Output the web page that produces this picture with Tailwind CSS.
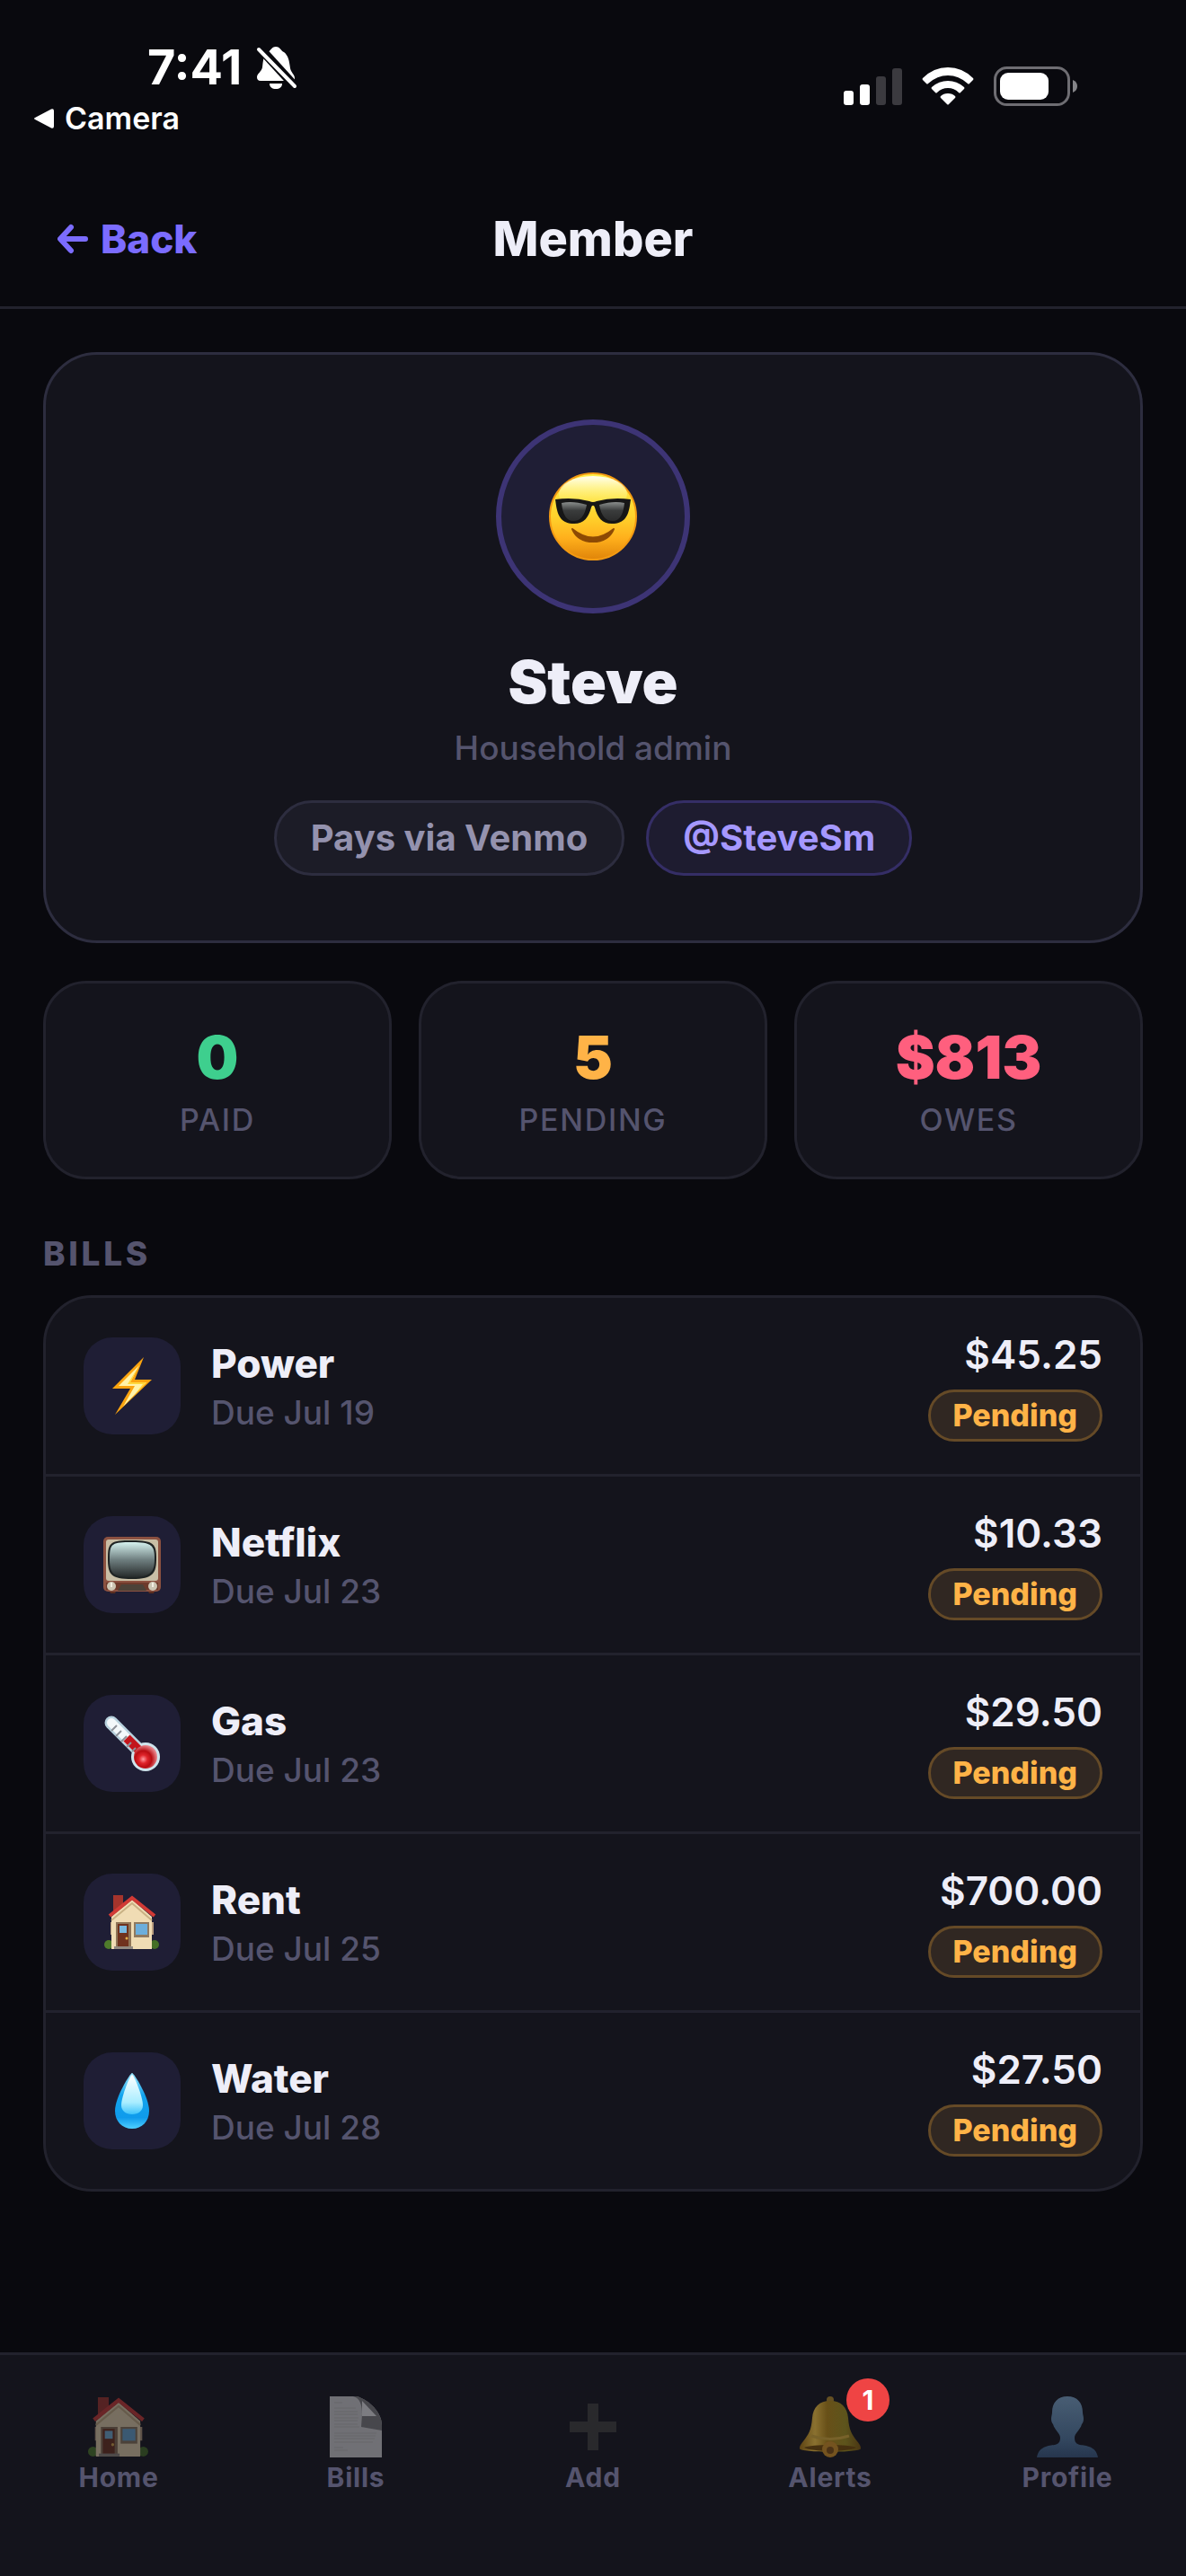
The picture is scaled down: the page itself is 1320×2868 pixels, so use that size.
<!DOCTYPE html>
<html lang="en">

<head>
    <meta charset="UTF-8">
    <meta name="viewport" content="width=device-width, initial-scale=1.0">
    <title>Member - Steve</title>
    <script src="https://cdn.jsdelivr.net/npm/@tailwindcss/browser@4"></script>
</head>

<body class="min-h-screen flex flex-col bg-[#09090e] text-[#eeeef8] font-['Inter',sans-serif]">

    <!-- Shared icons -->
    <svg class="absolute w-0 h-0" aria-hidden="true">
        <defs>
            <linearGradient id="face" x1="0" y1="0" x2="0" y2="1">
                <stop offset="0" stop-color="#fff04a" />
                <stop offset=".5" stop-color="#ffd22c" />
                <stop offset=".75" stop-color="#ffb01c" />
                <stop offset="1" stop-color="#e08409" />
            </linearGradient>
            <linearGradient id="shine" x1="0" y1="0" x2="0" y2="1">
                <stop offset="0" stop-color="#fffef0" />
                <stop offset="1" stop-color="#fff04a" stop-opacity="0" />
            </linearGradient>
            <linearGradient id="lens" x1="0" y1="0" x2="0" y2="1">
                <stop offset="0" stop-color="#8b8f8e" />
                <stop offset=".45" stop-color="#3a3c3c" />
                <stop offset="1" stop-color="#2b2b2b" />
            </linearGradient>
            <linearGradient id="screen" x1="0" y1="0" x2="0" y2="1">
                <stop offset="0" stop-color="#d6f2ef" />
                <stop offset=".5" stop-color="#6f7f80" />
                <stop offset="1" stop-color="#262a2a" />
            </linearGradient>
            <linearGradient id="drop" x1="0" y1="0" x2="0" y2="1">
                <stop offset="0" stop-color="#9be6fb" />
                <stop offset=".4" stop-color="#12a4ee" />
                <stop offset=".8" stop-color="#0f9bec" />
                <stop offset="1" stop-color="#4fd0ff" />
            </linearGradient>
            <linearGradient id="dropshine" x1="0" y1="0" x2="0" y2="1">
                <stop offset="0" stop-color="#ffffff" />
                <stop offset=".7" stop-color="#a9edff" />
                <stop offset="1" stop-color="#3fc4fb" />
            </linearGradient>
            <linearGradient id="person" x1="0" y1="0" x2="0" y2="1">
                <stop offset="0" stop-color="#485d73" />
                <stop offset=".7" stop-color="#33475f" />
                <stop offset="1" stop-color="#26364e" />
            </linearGradient>
            <linearGradient id="brass" x1="0" y1="0" x2="1" y2="0">
                <stop offset="0" stop-color="#5e4413" />
                <stop offset=".25" stop-color="#8a7130" />
                <stop offset=".45" stop-color="#685018" />
                <stop offset=".75" stop-color="#5d541c" />
                <stop offset="1" stop-color="#4a3612" />
            </linearGradient>
            <radialGradient id="bulb" cx=".4" cy=".6" r=".6">
                <stop offset="0" stop-color="#ff9aa0" />
                <stop offset=".3" stop-color="#e0252b" />
                <stop offset=".6" stop-color="#b80d12" />
                <stop offset="1" stop-color="#e8848a" />
            </radialGradient>
        </defs>
        <symbol id="house" viewBox="0 0 62 62">
            <circle cx="5" cy="56" r="5" fill="#4f7c2b" />
            <circle cx="56" cy="56" r="5" fill="#456f25" />
            <path d="M10 1h11v14L10 25z" fill="#a5342c" />
            <path d="M7 31h48v14H7z" fill="#b89d7e" />
            <path d="M8 25 31 6l22 19v36H8z" fill="#f0dcb4" />
            <path d="M8 29 31 10l22 19" fill="none" stroke="#c9b184" stroke-width="2" />
            <path d="M6 24 31 4l25 20" fill="none" stroke="#d23a35" stroke-width="4" />
            <path d="M13 31h17v28H13z" fill="#8f7558" />
            <path d="M15 33h12v26H15z" fill="#70321e" />
            <path d="M17 35h8v8h-8z" fill="#79b9e0" />
            <circle cx="25" cy="49" r="1.5" fill="#e2b04b" />
            <path d="M33 31h17v17H33z" fill="#8f7a60" />
            <path d="M35 33h13v12H35z" fill="#6caedb" />
            <path d="M11 58h21v3H11z" fill="#928a80" />
        </symbol>
    </svg>

    <!-- Status bar -->
    <div class="h-[191px] flex justify-between pl-9 pr-[120px] text-white">
        <div class="pt-11">
            <div class="flex items-center gap-4 pl-[128px]">
                <time class="text-[54px] leading-[62px] font-bold">7:41</time>
                <svg class="w-[46px] h-12" viewBox="0 0 46 48" fill="#fff">
                    <path d="M13 7c3-1 4-6 9-6s6 5 9 6c5 4 6 10 7 18 1 5 5 7 5 11 0 2-1 3-3 3H5c-3 0-4-2-4-4 0-4 5-6 6-11C8 16 8 11 13 7z" />
                    <path d="M15 42h14c0 4-3 6-7 6s-7-2-7-6z" />
                    <path d="M3 1l42 46" stroke="#09090e" stroke-width="10" />
                    <path d="M3 4l40 41" stroke="#fff" stroke-width="4" stroke-linecap="round" />
                </svg>
            </div>
            <a href="#" class="flex items-center gap-3 text-[34px] leading-[44px] font-semibold mt-1">
                <svg class="w-6 h-6" viewBox="0 0 24 24" fill="#fff">
                    <path d="M3 11 21 1.500q3-1 3 2v17q0 3-3 2L3 13q-2-1 0-2z" />
                </svg>
                Camera
            </a>
        </div>
        <div class="flex items-center gap-[22px] h-[192px]">
            <svg class="w-[66px] h-[42px]" viewBox="0 0 66 42">
                <rect x="1" y="26" width="11" height="16" rx="3" fill="#fff" />
                <rect x="19" y="19" width="11" height="23" rx="3" fill="#fff" />
                <rect x="37" y="10" width="11" height="32" rx="3" fill="#3b3a3f" />
                <rect x="55" y="1" width="11" height="41" rx="3" fill="#3b3a3f" />
            </svg>
            <svg class="w-[58px] h-[42px]" viewBox="0 0 58 42" fill="#fff">
                <path d="M1 12Q13 0 29 0t28 12q1 1 0 2l-4 4q-1 1-2 0Q41 9 29 9T7 18q-1 1-2 0l-4-4q-1-1 0-2z" />
                <path d="M11 22q8-7 18-7t18 7q1 1 0 2l-4 4q-1 1-2 0-5-5-12-5t-12 5q-1 1-2 0l-4-4q-1-1 0-2z" />
                <path d="M21 32q3-3 8-3t8 3q1 1 0 2l-7 7q-1 1-2 0l-7-7q-1-1 0-2z" />
            </svg>
            <svg class="w-[94px] h-11" viewBox="0 0 94 44">
                <rect x="1.500" y="1.500" width="82" height="41" rx="13" fill="none" stroke="#6e6d72" stroke-width="3" />
                <rect x="7" y="7" width="54" height="30" rx="9" fill="#fff" />
                <path d="M88 15q5 2 5 7t-5 7z" fill="#848488" />
            </svg>
        </div>
    </div>

    <!-- Header -->
    <header class="grid grid-cols-3 items-center px-[60px] py-[42px] border-b-3 border-[#22222d]">
        <button type="button" class="justify-self-start flex items-center gap-3 pl-1 text-[44px] leading-[66px] font-extrabold text-[#7b6cff]">
            <svg class="w-[36px] h-[36px]" viewBox="0 0 36 36" fill="none" stroke="currentColor" stroke-width="6" stroke-linecap="round" stroke-linejoin="round">
                <path d="M31 18H4M15 5 3 18l12 13" />
            </svg>
            Back
        </button>
        <h1 class="text-center text-[54px] leading-[66px] font-extrabold">Member</h1>
    </header>

    <main class="flex-1 px-12 pt-12">
        <!-- Member card -->
        <section class="flex flex-col items-center py-[72px] rounded-[60px] border-3 border-[#2d2d3f] bg-[#14141c]">
            <div class="w-[216px] h-[216px] rounded-full border-6 border-[#3d3475] bg-[#1f1e35] flex items-center justify-center">
                <svg class="w-[98px] h-[98px]" viewBox="0 0 98 98">
                    <circle cx="49" cy="49" r="48" fill="url(#face)" stroke="#f39a12" stroke-width="2" />
                    <ellipse cx="49" cy="24" rx="38" ry="20" fill="url(#shine)" />
                    <path d="M7 30q20-3 38 2 4 2 8 0 18-5 38-2l-1 7c-2 12-6 20-20 20-11 0-16-7-19-18-1-3-3-3-4 0-3 11-8 18-19 18C14 57 10 49 8 37z" fill="#161616" />
                    <path d="M14 34q12-3 28 2-3 18-15 18-11 0-13-20zM84 34q-12-3-28 2 3 18 15 18 11 0 13-20z" fill="url(#lens)" />
                    <path d="M26 63q23 19 46 0-6 14-23 14T26 63z" fill="#8d4a04" stroke="#8d4a04" stroke-width="2" stroke-linejoin="round" />
                </svg>
            </div>
            <h2 class="mt-9 text-[66px] leading-[80px] font-black">Steve</h2>
            <p class="mt-3 text-[37px] leading-[44px] font-medium text-[#55546e]">Household admin</p>
            <div class="mt-9 flex gap-6">
                <span class="px-[38px] py-[15px] rounded-full border-3 border-[#2d2d3f] bg-[#1c1c27] text-[40px] leading-[48px] font-bold text-[#9492ae]">Pays via Venmo</span>
                <a href="#" class="px-[38px] py-[15px] rounded-full border-3 border-[#352e66] bg-[#1e1c30] text-[40px] leading-[48px] font-bold text-[#a598ff]">@SteveSm</a>
            </div>
        </section>

        <!-- Totals -->
        <section class="mt-[42px] grid grid-cols-3 gap-[30px] text-center">
            <div class="py-[42px] rounded-[48px] border-3 border-[#22222d] bg-[#14141c]">
                <p class="text-[66px] leading-[80px] font-black text-[#3ecf8e]">0</p>
                <p class="mt-[9px] text-[34px] leading-[42px] font-medium tracking-wider text-[#55546e]">PAID</p>
            </div>
            <div class="py-[42px] rounded-[48px] border-3 border-[#22222d] bg-[#14141c]">
                <p class="text-[66px] leading-[80px] font-black text-[#ffb347]">5</p>
                <p class="mt-[9px] text-[34px] leading-[42px] font-medium tracking-wider text-[#55546e]">PENDING</p>
            </div>
            <div class="py-[42px] rounded-[48px] border-3 border-[#22222d] bg-[#14141c]">
                <p class="text-[66px] leading-[80px] font-black text-[#ff5f7e]">$813</p>
                <p class="mt-[9px] text-[34px] leading-[42px] font-medium tracking-wider text-[#55546e]">OWES</p>
            </div>
        </section>

        <!-- Bills -->
        <h3 class="mt-15 mb-6 text-[37px] leading-[45px] font-extrabold tracking-widest text-[#55546e]">BILLS</h3>
        <ul class="rounded-[54px] border-3 border-[#22222d] bg-[#14141c] divide-y-3 divide-[#22222d]">
            <li class="flex items-center gap-[34px] px-[42px] py-9">
                <div class="w-[108px] h-[108px] rounded-[32px] bg-[#1f1e35] flex items-center justify-center">
                    <svg class="w-16 h-16" viewBox="0 0 64 64">
                        <path d="M45 0 10 35h20L13 64l41-39H35z" fill="#fba40f" />
                        <path d="M40 9 17 32h18l-13 23 26-27H30z" fill="#fff3a8" />
                        <path d="M40 9 30 28h18L34 43l10-13H27z" fill="#ffd83a" />
                    </svg>
                </div>
                <div class="flex-1">
                    <p class="text-[44px] leading-[54px] font-extrabold">Power</p>
                    <p class="mt-[6px] text-[37px] leading-[44px] font-medium text-[#55546e]">Due Jul 19</p>
                </div>
                <div class="flex flex-col items-end gap-3">
                    <span class="text-[44px] leading-[54px] font-semibold">$45.25</span>
                    <span class="px-[25px] py-[6px] rounded-full border-3 border-[#654a27] bg-[#302722] text-[34px] leading-[40px] font-extrabold text-[#ffb347]">Pending</span>
                </div>
            </li>
            <li class="flex items-center gap-[34px] px-[42px] py-9">
                <div class="w-[108px] h-[108px] rounded-[32px] bg-[#1f1e35] flex items-center justify-center">
                    <svg class="w-16 h-16" viewBox="0 0 64 64">
                        <path d="M6 60h9l-2 4H8zM49 60h9l-2 4h-5z" fill="#5a2d20" />
                        <rect x="0" y="1" width="64" height="61" rx="5" fill="#8c5140" />
                        <rect x="3" y="4" width="58" height="46" rx="3" fill="#c9bfa6" />
                        <path d="M32 5c24 0 27 4 27 20S56 48 32 48 5 43 5 25 8 5 32 5z" fill="#1f2424" />
                        <path d="M32 7c22 0 25 4 25 18S54 46 32 46 7 42 7 25 10 7 32 7z" fill="url(#screen)" />
                        <path d="M3 52h58v8H3z" fill="#6d3a2b" />
                        <path d="M20 54h24l4 7H16z" fill="#4c4238" />
                        <circle cx="9" cy="56" r="5" fill="#cdc6b4" />
                        <circle cx="55" cy="56" r="5" fill="#cdc6b4" />
                        <path d="M9 52v5M55 52v5" stroke="#f2eee2" stroke-width="2" />
                    </svg>
                </div>
                <div class="flex-1">
                    <p class="text-[44px] leading-[54px] font-extrabold">Netflix</p>
                    <p class="mt-[6px] text-[37px] leading-[44px] font-medium text-[#55546e]">Due Jul 23</p>
                </div>
                <div class="flex flex-col items-end gap-3">
                    <span class="text-[44px] leading-[54px] font-semibold">$10.33</span>
                    <span class="px-[25px] py-[6px] rounded-full border-3 border-[#654a27] bg-[#302722] text-[34px] leading-[40px] font-extrabold text-[#ffb347]">Pending</span>
                </div>
            </li>
            <li class="flex items-center gap-[34px] px-[42px] py-9">
                <div class="w-[108px] h-[108px] rounded-[32px] bg-[#1f1e35] flex items-center justify-center">
                    <svg class="w-16 h-16" viewBox="0 0 64 64">
                        <path d="M9 9 46 46" stroke="#b8d2de" stroke-width="15" stroke-linecap="round" />
                        <circle cx="47" cy="47" r="16" fill="#cfe4ec" />
                        <path d="M9 9 46 46" stroke="#f3f8fa" stroke-width="10" stroke-linecap="round" />
                        <path d="M26 26 44 44" stroke="#c3161c" stroke-width="10" />
                        <circle cx="47" cy="47" r="13" fill="url(#bulb)" />
                        <path d="M9 18l6-6M14 24l6-6M20 30l6-6M26 36l5-5M32 41l4-4" stroke="#8d9298" stroke-width="2" />
                    </svg>
                </div>
                <div class="flex-1">
                    <p class="text-[44px] leading-[54px] font-extrabold">Gas</p>
                    <p class="mt-[6px] text-[37px] leading-[44px] font-medium text-[#55546e]">Due Jul 23</p>
                </div>
                <div class="flex flex-col items-end gap-3">
                    <span class="text-[44px] leading-[54px] font-semibold">$29.50</span>
                    <span class="px-[25px] py-[6px] rounded-full border-3 border-[#654a27] bg-[#302722] text-[34px] leading-[40px] font-extrabold text-[#ffb347]">Pending</span>
                </div>
            </li>
            <li class="flex items-center gap-[34px] px-[42px] py-9">
                <div class="w-[108px] h-[108px] rounded-[32px] bg-[#1f1e35] flex items-center justify-center">
                    <svg class="w-[62px] h-[62px]">
                        <use href="#house" />
                    </svg>
                </div>
                <div class="flex-1">
                    <p class="text-[44px] leading-[54px] font-extrabold">Rent</p>
                    <p class="mt-[6px] text-[37px] leading-[44px] font-medium text-[#55546e]">Due Jul 25</p>
                </div>
                <div class="flex flex-col items-end gap-3">
                    <span class="text-[44px] leading-[54px] font-semibold">$700.00</span>
                    <span class="px-[25px] py-[6px] rounded-full border-3 border-[#654a27] bg-[#302722] text-[34px] leading-[40px] font-extrabold text-[#ffb347]">Pending</span>
                </div>
            </li>
            <li class="flex items-center gap-[34px] px-[42px] py-9">
                <div class="w-[108px] h-[108px] rounded-[32px] bg-[#1f1e35] flex items-center justify-center">
                    <svg class="w-16 h-16" viewBox="0 0 64 64">
                        <path d="M32 1c2 0 19 27 19 42 0 12-8 20-19 20s-19-8-19-20C13 28 30 1 32 1z" fill="url(#drop)" />
                        <path d="M32 3c2 0 12 24 12 34 0 6-5 10-12 10s-12-4-12-10C20 27 30 3 32 3z" fill="url(#dropshine)" />
                    </svg>
                </div>
                <div class="flex-1">
                    <p class="text-[44px] leading-[54px] font-extrabold">Water</p>
                    <p class="mt-[6px] text-[37px] leading-[44px] font-medium text-[#55546e]">Due Jul 28</p>
                </div>
                <div class="flex flex-col items-end gap-3">
                    <span class="text-[44px] leading-[54px] font-semibold">$27.50</span>
                    <span class="px-[25px] py-[6px] rounded-full border-3 border-[#654a27] bg-[#302722] text-[34px] leading-[40px] font-extrabold text-[#ffb347]">Pending</span>
                </div>
            </li>
        </ul>
    </main>

    <!-- Tab bar -->
    <nav class="grid grid-cols-5 pt-[46px] pb-[92px] border-t-3 border-[#22222d] bg-[#14141c] text-[30px] leading-9 font-bold tracking-wide text-[#55546e]">
        <a href="#" class="flex flex-col items-center gap-1">
            <svg class="w-[68px] h-[68px] opacity-45">
                <use href="#house" />
            </svg>
            Home
        </a>
        <a href="#" class="flex flex-col items-center gap-1">
            <svg class="w-[68px] h-[68px]" viewBox="0 0 68 68">
                <path d="M5 0h30c14 4 28 18 28 32v36H5z" fill="#707075" />
                <path d="M10 7h9M10 13h24M10 17h26M10 20h26M10 24h27M10 27h26M10 31h26M10 34h28M10 41h47M10 44h46M10 47h45M10 51h43M10 57h10M10 60h15" stroke="#66666b" />
                <path d="M31 0c8 2 10 10 10 20l-1 14 23 4v-6C63 18 49 4 35 0z" fill="#47474c" />
                <path d="M41 5 57 22H41z" fill="#7c7c81" />
            </svg>
            Bills
        </a>
        <a href="#" class="flex flex-col items-center gap-1">
            <svg class="w-[68px] h-[68px]" viewBox="0 0 68 68">
                <path d="M28 8h12v20h20v12H40v20H28V40H8V28h20z" fill="#29292c" />
            </svg>
            Add
        </a>
        <a href="#" class="flex flex-col items-center gap-1">
            <span class="relative">
                <svg class="w-[68px] h-[68px]" viewBox="0 0 68 68">
                    <circle cx="34" cy="4" r="4" fill="#655022" />
                    <path d="M34 5c12 0 19 7 20 19 1 14 4 18 10 26 3 4 4 5 4 8 0 5-68 5-68 0 0-3 1-4 4-8 6-8 9-12 10-26C15 12 22 5 34 5z" fill="url(#brass)" />
                    <path d="M5 57c8-4 50-4 58 0-8 5-50 5-58 0z" fill="#46300f" />
                    <path d="M13 44q21 7 42 0" fill="none" stroke="#78622a" stroke-width="3" />
                    <circle cx="34" cy="59" r="9" fill="#74531f" />
                    <circle cx="34" cy="60" r="4" fill="#4b3216" />
                </svg>
                <span class="absolute -top-5 -right-8 w-12 h-12 rounded-full bg-[#ef4444] flex items-center justify-center font-bold tracking-normal text-white">1</span>
            </span>
            Alerts
        </a>
        <a href="#" class="flex flex-col items-center gap-1">
            <svg class="w-[68px] h-[68px]" viewBox="0 0 68 68">
                <path d="M34 0c11 0 17 7 17 18 0 2 1 4 1 7s-1 5-2 6c-2 7-8 10-8 15 0 10 8 7 16 10 6 2 9 6 10 12H0c1-6 4-10 10-12 8-3 16 0 16-10 0-5-6-8-8-15-1-1-2-3-2-6s1-5 1-7C17 7 23 0 34 0z" fill="url(#person)" />
            </svg>
            Profile
        </a>
    </nav>
</body>

</html>
